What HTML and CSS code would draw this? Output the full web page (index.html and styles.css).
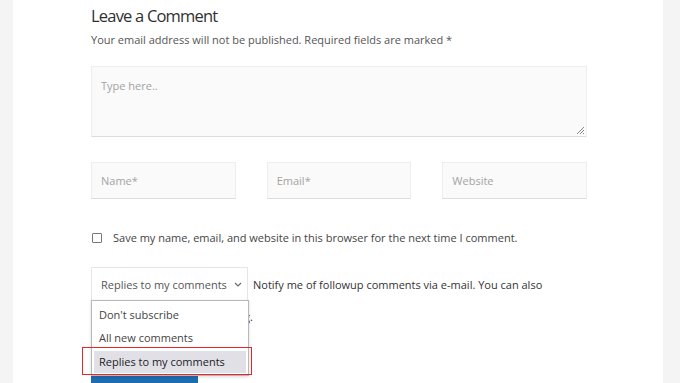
FILE: index.html
```html
<!DOCTYPE html>
<html lang="en">
<head>
<meta charset="utf-8">
<title>Leave a Comment</title>
<link rel="stylesheet" href="styles.css">
</head>
<body>
<div class="page">
  <div class="content">
    <h2 class="title">Leave a Comment</h2>
    <p class="notes">Your email address will not be published. Required fields are marked *</p>
    <div class="textarea">
      <span class="ph">Type here..</span>
      <svg class="grip" width="9" height="9" viewBox="0 0 9 9"><path d="M8 1 L1 8 M8 4 L4 8 M8 7 L7 8" stroke="#888" stroke-width="1"/></svg>
    </div>
    <div class="fields">
      <div class="field"><span class="ph">Name*</span></div>
      <div class="field"><span class="ph">Email*</span></div>
      <div class="field"><span class="ph">Website</span></div>
    </div>
    <label class="cookies"><span class="box"></span>Save my name, email, and website in this browser for the next time I comment.</label>
    <div class="subscribe">
      <div class="selectwrap">
        <div class="select"><span>Replies to my comments</span>
          <svg class="chev" width="8" height="5" viewBox="0 0 8 5"><path d="M1 1 L4 4 L7 1" fill="none" stroke="#666" stroke-width="1.1"/></svg>
        </div>
        <ul class="menu">
          <li>Don't subscribe</li>
          <li>All new comments</li>
          <li class="sel">Replies to my comments</li>
        </ul>
        <div class="mark"></div>
      </div>
      <span class="stext">Notify me of followup comments via e-mail. You can also</span>
    </div>
    <p class="more">subscribe without commenting.</p>
    <div class="submit"></div>
  </div>
</div>
</body>
</html>
```

FILE: styles.css
```css
html, body {
  margin: 0;
  padding: 0;
  background: #f4f4f4;
  font-family: "Open Sans", "Noto Sans", sans-serif;
  color: #444;
}
.page {
  margin: 0 17px 0 13px;
  background: #fff;
  height: 383px;
  overflow: hidden;
}
.content {
  width: 496px;
  margin-left: 78px;
  padding-top: 4px;
}
.title {
  margin: 0;
  font-size: 16.5px;
  font-weight: 400;
  letter-spacing: -0.8px;
  line-height: 24px;
  color: #2f2f2f;
}
.notes {
  margin: 2px 0 0;
  font-size: 11px;
  line-height: 20px;
  color: #555;
}
.textarea {
  position: relative;
  margin-top: 16px;
  background: #fafafa;
  border: 1px solid #eee;
  border-bottom-color: #ddd;
  padding: 6px 9px;
  box-sizing: border-box;
  height: 71px;
}
.ph {
  font-size: 11px;
  color: #a3a3a3;
}
.grip {
  position: absolute;
  right: 1px;
  bottom: 1px;
}
.fields {
  display: flex;
  gap: 31px;
  margin-top: 25px;
}
.field {
  width: 145px;
  height: 37px;
  box-sizing: border-box;
  background: #fafafa;
  border: 1px solid #eee;
  border-bottom-color: #ddd;
  display: flex;
  align-items: center;
  padding-left: 9px;
}
.cookies {
  display: flex;
  align-items: center;
  margin-top: 30px;
  font-size: 11px;
  line-height: 18px;
  color: #444;
  white-space: nowrap;
}
.box {
  width: 10px;
  height: 10px;
  border: 1px solid #777;
  border-radius: 1px;
  margin: 0 11px 0 1px;
  box-sizing: border-box;
}
.subscribe {
  display: flex;
  align-items: center;
  margin-top: 20px;
  white-space: nowrap;
}
.selectwrap {
  position: relative;
}
.select {
  width: 157px;
  height: 35px;
  box-sizing: border-box;
  border: 1px solid #e6e6e6;
  display: flex;
  align-items: center;
  justify-content: space-between;
  padding: 0 5px 0 9px;
  font-size: 11px;
  color: #555;
  background: #fff;
}
.stext {
  margin-left: 5px;
  font-size: 11px;
  color: #333;
}
.menu {
  position: absolute;
  left: 0;
  top: 33px;
  width: 158px;
  box-sizing: border-box;
  margin: 0;
  padding: 2px 2px 2px;
  list-style: none;
  background: #fff;
  border: 1px solid #b8b8b8;
  box-shadow: 0 1px 3px rgba(0,0,0,0.15);
  z-index: 2;
}
.menu li {
  height: 23px;
  line-height: 23px;
  padding-left: 5px;
  font-size: 11px;
  color: #444;
}
.menu li.sel {
  height: 22px;
  line-height: 22px;
  background: #e1e0e7;
  color: #222;
  margin-top: 2px;
}
.mark {
  position: absolute;
  left: -9px;
  top: 80px;
  width: 170px;
  height: 28px;
  box-sizing: border-box;
  border: 1px solid #e3262c;
  z-index: 3;
}
.more {
  margin: 6px 0 0;
  font-size: 11px;
  line-height: 18px;
  color: #333;
}
.submit {
  margin-top: 45px;
  width: 107px;
  height: 30px;
  background: #1e6cb0;
}
```
